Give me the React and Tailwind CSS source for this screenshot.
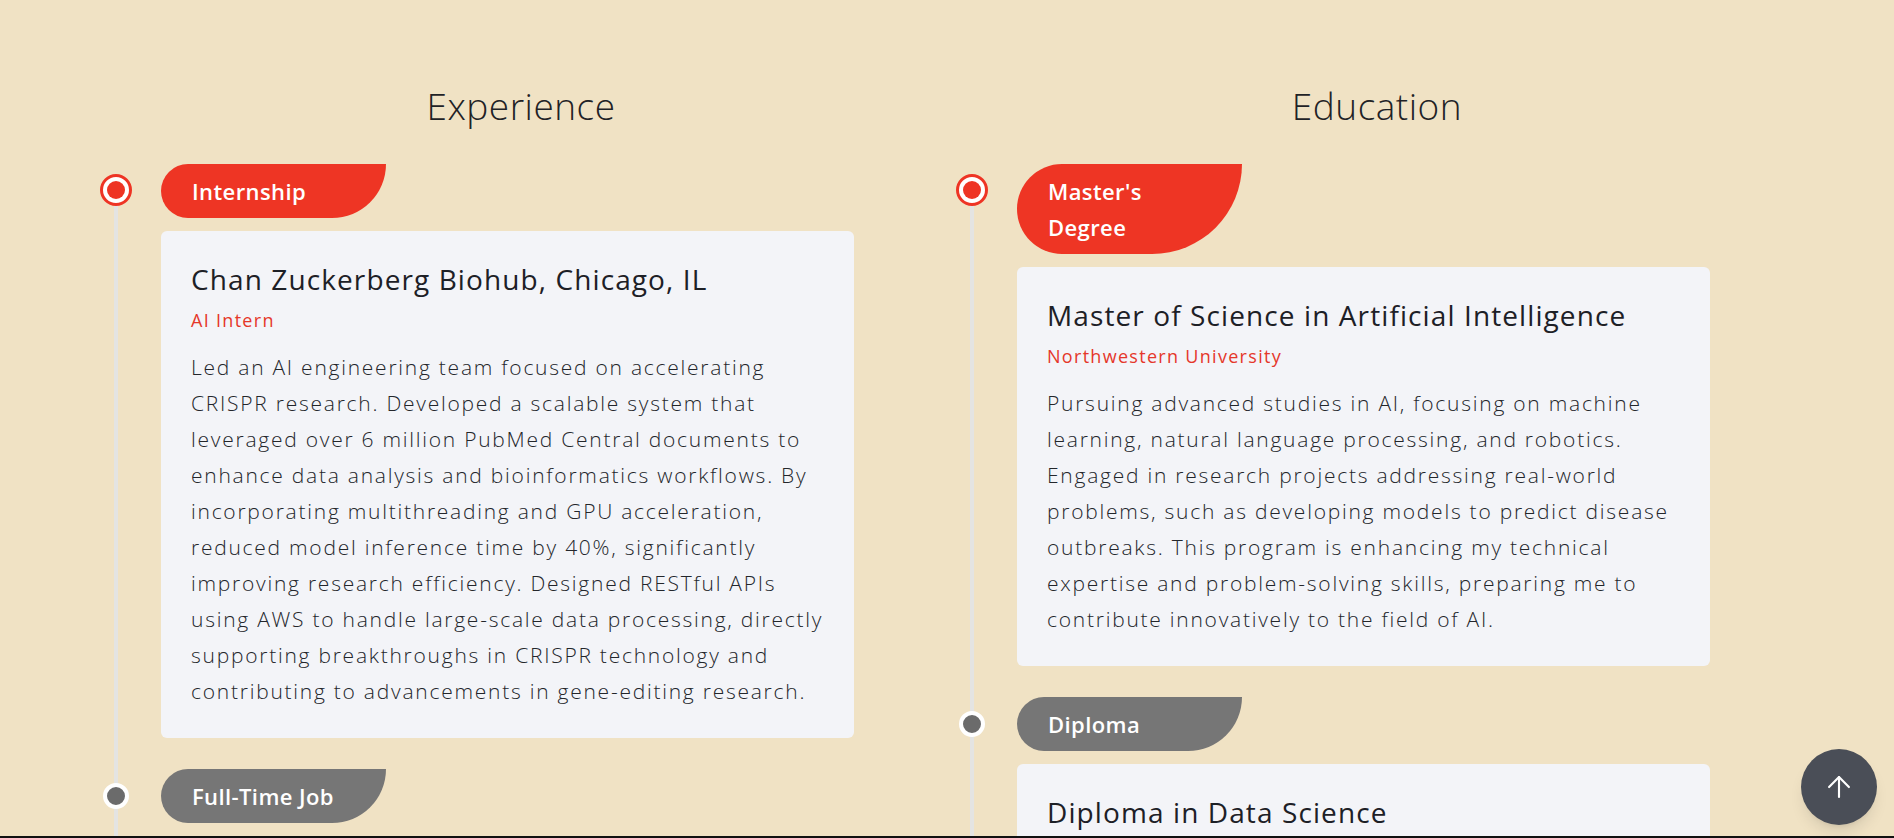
import React from 'react';
import { ArrowUp } from 'lucide-react';

const experience = [
  {
    tag: 'Internship',
    active: true,
    title: 'Chan Zuckerberg Biohub, Chicago, IL',
    org: 'AI Intern',
    text: 'Led an AI engineering team focused on accelerating CRISPR research. Developed a scalable system that leveraged over 6 million PubMed Central documents to enhance data analysis and bioinformatics workflows. By incorporating multithreading and GPU acceleration, reduced model inference time by 40%, significantly improving research efficiency. Designed RESTful APIs using AWS to handle large-scale data processing, directly supporting breakthroughs in CRISPR technology and contributing to advancements in gene-editing research.',
  },
  {
    tag: 'Full-Time Job',
    active: false,
    title: 'Software Engineer',
    org: 'Company',
    text: 'Built and maintained production services.',
  },
];

const education = [
  {
    tag: "Master's Degree",
    active: true,
    title: 'Master of Science in Artificial Intelligence',
    org: 'Northwestern University',
    text: 'Pursuing advanced studies in AI, focusing on machine learning, natural language processing, and robotics. Engaged in research projects addressing real-world problems, such as developing models to predict disease outbreaks. This program is enhancing my technical expertise and problem-solving skills, preparing me to contribute innovatively to the field of AI.',
  },
  {
    tag: 'Diploma',
    active: false,
    title: 'Diploma in Data Science',
    org: 'Institute',
    text: 'Foundations of statistics, data analysis and machine learning.',
  },
];

function Item({ item }) {
  return (
    <div className="relative flex gap-[29px]">
      {/* dot on the line */}
      <div className="w-[32px] shrink-0 flex justify-center">
        {item.active ? (
          <div className="mt-[10px] w-[32px] h-[32px] rounded-full border-[3px] border-[#ee3424] bg-white p-[4px]">
            <div className="w-full h-full rounded-full bg-[#ee3424]" />
          </div>
        ) : (
          <div className="mt-[14px] w-[26px] h-[26px] rounded-full bg-[#6b6b6b] border-[4px] border-white" />
        )}
      </div>

      <div className="flex flex-col gap-[13px]">
        <div
          className={`w-[225px] px-[31px] py-[9px] text-[22px] leading-[36px] font-semibold tracking-[0.4px] text-white rounded-[50px_0_100px_50px] ${
            item.active ? 'bg-[#ee3524]' : 'bg-[#767676]'
          }`}
        >
          {item.tag}
        </div>

        <div className="w-[693px] rounded-md bg-[#f3f4f8] pl-[30px] pr-[24px] pt-[30px] pb-[29px]">
          <h3 className="text-[28px] leading-[36px] font-medium tracking-[1.1px] text-[#1d2026]">{item.title}</h3>
          <p className="mt-[9px] text-[18px] leading-[28px] tracking-[1.3px] text-[#e5372a]">{item.org}</p>
          <p className="mt-[15px] text-[21px] leading-[36px] font-light tracking-[1.75px] text-[#23262b]">{item.text}</p>
        </div>
      </div>
    </div>
  );
}

function Column({ heading, items }) {
  return (
    <div className="w-[842px] flex flex-col gap-[36px]">
      <h2 className="text-center text-[37px] leading-[44px] font-light tracking-[0.5px] text-[#1f2226]">{heading}</h2>
      <div className="relative flex flex-col gap-[31px]">
        <div className="absolute left-[14px] top-[20px] bottom-0 w-[4px] bg-[#e4e4e2]" />
        {items.map((it) => (
          <Item key={it.tag} item={it} />
        ))}
      </div>
    </div>
  );
}

export default function App() {
  return (
    <div className="h-[838px] overflow-hidden bg-[#f0e2c4] font-['Open_Sans',sans-serif]">
      <div className="flex gap-[14px] pl-[100px] pt-[84px]">
        <Column heading="Experience" items={experience} />
        <Column heading="Education" items={education} />
      </div>

      <button className="fixed right-[17px] bottom-[13px] w-[76px] h-[76px] rounded-full bg-[#4a4e57] shadow-lg flex items-center justify-center">
        <ArrowUp size={34} strokeWidth={1.5} className="text-white" />
      </button>
      <div className="fixed left-0 right-0 bottom-0 h-[2px] bg-[#111]" />
    </div>
  );
}
